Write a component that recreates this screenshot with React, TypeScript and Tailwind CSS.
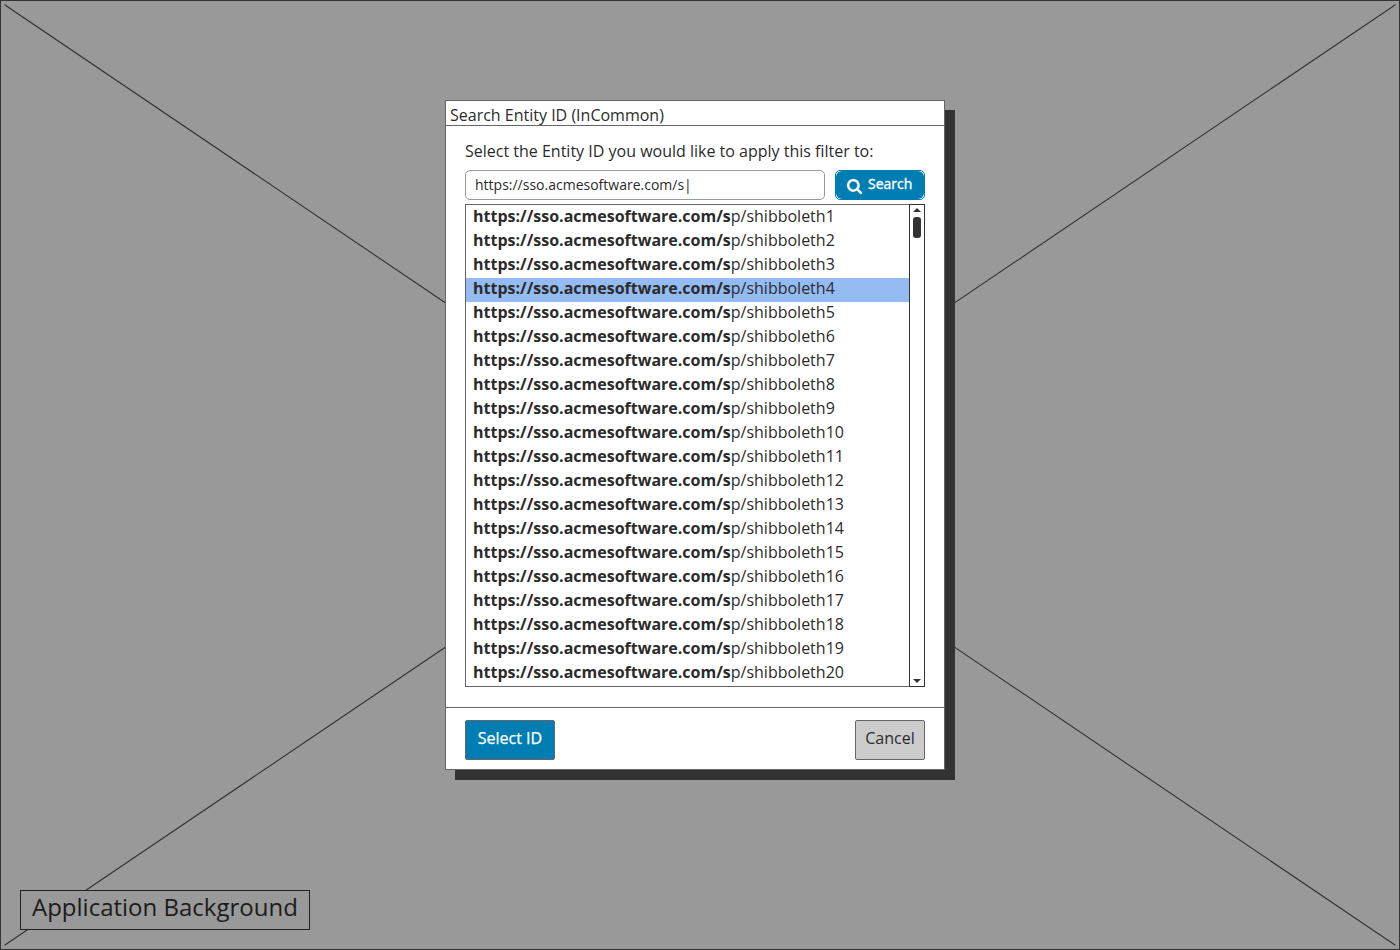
const SELECTED = 4;
const rows = Array.from({ length: 20 }, (_, i) => i + 1);

function SearchIcon() {
  return (
    <svg viewBox="64 128 1664 1664" className="mt-[2px] size-[15px] shrink-0 fill-white stroke-white" strokeWidth="24" overflow="visible" aria-hidden="true">
      <path d="M1216 832q0-185-131.5-316.5t-316.5-131.5-316.5 131.5-131.5 316.5 131.5 316.5 316.5 131.5 316.5-131.5 131.5-316.5zm512 832q0 52-38 90t-90 38q-54 0-90-38l-343-342q-179 124-399 124-143 0-273.5-55.5t-225-150-150-225-55.5-273.5 55.5-273.5 150-225 225-150 273.5-55.5 273.5 55.5 225 150 150 225 55.5 273.5q0 220-124 399l343 343q37 37 37 90z" />
    </svg>
  );
}

function Scrollbar() {
  return (
    <div className="-my-px -mr-px flex w-4 flex-col items-center border border-[#333] bg-white">
      <svg viewBox="0 0 8 4" className="mt-[3px] h-1 w-2 shrink-0 fill-[#333]" aria-hidden="true">
        <path d="M0 4L4 0L8 4Z" />
      </svg>
      <div className="mt-[5px] h-[21px] w-2 rounded-[3px] bg-[#333]" />
      <svg viewBox="0 0 8 4" className="mt-auto mb-[3px] h-1 w-2 shrink-0 fill-[#333]" aria-hidden="true">
        <path d="M0 0H8L4 4Z" />
      </svg>
    </div>
  );
}

function Dialog() {
  return (
    <div className="flex h-[670px] w-[500px] flex-col border border-[#666] bg-white shadow-[10px_10px_0_0_#333]">
      <div className="h-[25px] border-b border-[#666] pl-1 text-base leading-[28px] whitespace-nowrap">
        Search Entity ID (InCommon)
      </div>
      <div className="flex flex-1 flex-col px-[19px]">
        <p className="mt-[13px] h-[31px] text-base leading-6 whitespace-nowrap">
          Select the Entity ID you would like to apply this filter to:
        </p>
        <div className="flex gap-[10px]">
          <div className="h-[30px] w-[360px] rounded-[5px] border border-[#999] pl-[9px] text-sm leading-[28px]">
            https://sso.acmesoftware.com/s|
          </div>
          <button className="flex h-[30px] w-[90px] rounded-[5px] border border-[#007eb4] bg-white text-sm leading-[28px] text-white">
            <span className="flex h-7 w-full items-center rounded-[6px] bg-[#007eb4] pl-[11px]">
              <SearchIcon />
              <span className="-mt-[2px] ml-[6px] [-webkit-text-stroke:0.35px_white]">Search</span>
            </span>
          </button>
        </div>
        <div className="mt-1 flex h-[483px] border border-[#666]">
          <ul className="flex-1 pt-px">
            {rows.map((n) => (
              <li
                key={n}
                className={`h-6 pl-[7px] text-base leading-[20px] whitespace-nowrap ${n === SELECTED ? "bg-[#94bbf2]" : ""}`}
              >
                <b className="font-bold">https://sso.acmesoftware.com/s</b>p/shibboleth{n}
              </li>
            ))}
          </ul>
          <Scrollbar />
        </div>
      </div>
      <div className="flex h-[62px] justify-between border-t border-[#666] px-[19px] pt-3">
        <button className="h-10 w-[90px] rounded-[2px] border border-[#666] bg-[#007eb4] pb-1 text-base text-white [-webkit-text-stroke:0.25px_white]">
          Select ID
        </button>
        <button className="h-10 w-[70px] rounded-[2px] border border-[#666] bg-[#ccc] pb-1 text-base">
          Cancel
        </button>
      </div>
    </div>
  );
}

export default function App() {
  return (
    <main className="relative isolate flex h-[950px] w-[1400px] flex-col items-center overflow-hidden border border-[#333] bg-[#999] font-['Open_Sans',sans-serif] text-[#2b2b2b]">
      <svg viewBox="0 0 1400 950" className="absolute -top-px -left-px -z-10 h-[950px] w-[1400px] stroke-[#333]" aria-hidden="true">
        <path d="M5 5L1395 945M1395 5L5 945" strokeWidth="1.1" strokeLinecap="square" />
      </svg>
      <div className="mt-[99px] mr-[10px]">
        <Dialog />
      </div>
      <div className="mt-auto mb-[19px] ml-[19px] h-10 w-[290px] self-start border border-[#222] bg-[#999] pl-[11px] text-2xl leading-[31px] whitespace-nowrap text-[#1c1c1c]">
        Application Background
      </div>
    </main>
  );
}
